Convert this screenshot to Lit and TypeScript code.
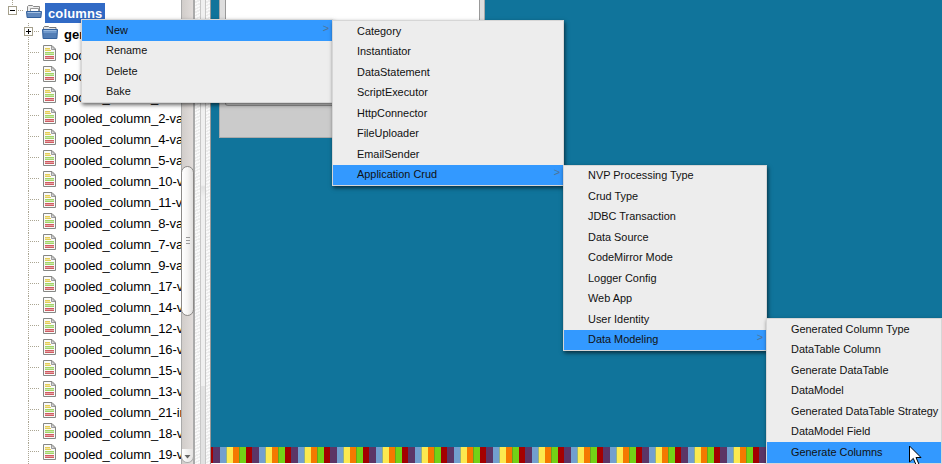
import { LitElement, html, css, svg } from "lit";
import { customElement, property } from "lit/decorators.js";

const columns = ["1-va", "6-va", "3-va", "2-va", "4-va", "5-va", "10-va", "11-va", "8-va", "7-va", "9-va", "17-va", "14-va", "12-va", "16-va", "15-va", "13-va", "21-in", "18-va", "19-va"];

const folder = svg`<path d="M1.5 8V2.5l1-1h4l1 1h6v6" fill="#eee" stroke="#888"/><path d="M4.5 8V4.5h8V8" fill="#fff" stroke="#999"/><path d="M.5 7.5h15l-.6 6h-13.8z" fill="#6088bd" stroke="#315f9b"/><path d="M1.5 8.5h13" stroke="#a7c2e2"/>`;
const closedFolder = svg`<path d="M1.5 11V2.5l1-1h4l1 1h6.5V11" fill="#e4e4e4" stroke="#777"/><path d="M.5 4.5h15l-.6 9h-13.8z" fill="#527db5" stroke="#315f9b"/><path d="M1.5 5.5h13" stroke="#9dbce0"/><path d="M1.5 7h13" stroke="#6f98cb" stroke-width="2"/>`;
const sheet = svg`<path d="M1.5.5h8.5l3.5 3.5v11.5h-12z" fill="#fafaf8" stroke="#858784"/><path d="M9.5 1v3.5h3.7z" fill="#ddd" stroke="#888" stroke-width=".8"/><path d="M3 3.5h5M3 5.5h6" stroke="#e5cd55"/><path d="M3 4.5h5" stroke="#f0e3a0"/><path d="M3 7.5h9M3 9.5h9" stroke="#a0d468"/><path d="M3 8.5h9" stroke="#cbe8ac"/><path d="M3 11.5h9M3 13.5h9" stroke="#cf5c62"/><path d="M3 12.5h9" stroke="#e5a3a5"/>`;

@customElement("context-menu")
class ContextMenu extends LitElement {
  @property({ attribute: false }) items: string[] = [];
  @property() active = "";
  @property({ type: Boolean }) last = false;
  static styles = css`
    :host { display: block; box-sizing: border-box; background: #ededed; border: 1px solid #d6d6d6; box-shadow: 1px 2px 4px rgba(0,0,0,.6); font: 10.92px/13px "Liberation Sans", sans-serif; color: #111; }
    .item { display: flex; height: 20.47px; box-sizing: border-box; padding: var(--text-top, 3.6px) 3px 0 24px; justify-content: space-between; white-space: nowrap; }
    .active { background: #3399ff; }
    .arrow { color: #507496; margin-top: -2px; }
  `;
  render() {
    return this.items.map(i => html`<div class="item ${i === this.active ? "active" : ""}"><span>${i}</span>${i === this.active && !this.last ? html`<span class="arrow">&gt;</span>` : ""}</div>`);
  }
}

@customElement("app-root")
class AppRoot extends LitElement {
  static styles = css`
    :host { display: block; position: relative; width: 942px; height: 464px; overflow: hidden; font: 13px/21px "Liberation Sans", sans-serif; color: #000; background: #fff; }
    .page { display: flex; height: 464px; }
    .tree { width: 181px; height: 464px; overflow: hidden; white-space: nowrap; }
    .row { display: flex; height: 21px; position: relative; }
    .root { height: 23px; }
    .branch { width: 28px; box-sizing: border-box; flex: none; }
    .line { width: 14px; flex: none; background: repeating-linear-gradient(#aaa592 0 1px, transparent 1px 2px) 0 0 / 1px 100% no-repeat, repeating-linear-gradient(90deg, #aaa592 0 1px, transparent 1px 2px) 0 8px / 11px 1px no-repeat; }
    .icon { flex: none; width: 16px; height: 16px; margin-right: 6px; }
    .root .icon { margin: 4px 3px 0 0; }
    .root .branch { width: 26px; }
    .folder .icon { margin-top: 2px; }
    .file .icon { margin-top: 1px; }
    .name { margin-top: 1px; }
    .file .name { letter-spacing: -.09px; }
    .bold { font-weight: bold; }
    .selected { background: #316ac5; color: #fff; height: 20px; margin-top: 3px; padding: 0 3px; font-weight: bold; letter-spacing: .12px; }
    .toggle { position: absolute; left: 8px; top: 6px; width: 9px; height: 9px; }
    .folder .toggle { left: 24px; top: 4px; }
    .rootline { position: absolute; left: 12px; top: 0; width: 14px; height: 12px; background: repeating-linear-gradient(#aaa592 0 1px, transparent 1px 2px) 0 0 / 1px 100% no-repeat, repeating-linear-gradient(90deg, #aaa592 0 1px, transparent 1px 2px) 0 10px / 11px 1px no-repeat; }
    .scroll { width: 14px; height: 464px; position: relative; box-sizing: border-box; border-left: 1px solid #aaa; border-right: 2px solid #aaa; background: linear-gradient(90deg, #d1cdca, #e1dcda); }
    .thumb { position: absolute; top: 166px; left: -1px; width: 13px; height: 150px; box-sizing: border-box; border: 1px solid #8b8987; border-radius: 7px; background: linear-gradient(90deg, #fff, #f5f4f3 50%, #dfdddc); }
    .grip { position: absolute; left: 4px; top: 70px; width: 4px; height: 7px; background: repeating-linear-gradient(#999 0 1px, transparent 1px 3px); }
    .down { position: absolute; left: -1px; bottom: 1px; width: 13px; height: 14px; box-sizing: border-box; border: 1px solid #aaa; border-top: 0; border-radius: 0 0 7px 7px; background: linear-gradient(90deg, #fff, #e4e2e1); }
    .down svg { display: block; margin: 5px 0 0 2px; }
    .splitter { display: flex; width: 16px; box-sizing: border-box; border-right: 1px solid #999; }
    .hatch { width: 5px; background: repeating-linear-gradient(155deg, #fafafa 0 1.5px, #ececec 1.5px 3px); }
    .bar { width: 5px; border: 0 solid #c7c7c7; border-width: 0 1px 0 1px; background: linear-gradient(#f0f0f0 0 185px, #e1e1e1 187px, #f0f0f0 197px, #f0f0f0 386px, #e2e2e2 386px); }
    .hatch.right { width: 4px; }
    .desktop { flex: 1; display: flex; flex-direction: column; background: #10749b; }
    .space { flex: 1; }
    .window { margin-left: 8px; width: 266px; height: 138px; box-sizing: border-box; padding: 0 4px 31px 5px; border: 1px solid #aaa; border-top: 0; background: linear-gradient(#dedede, #dedede 105px, #cbcbcb 107px); }
    .content { height: 106px; box-sizing: border-box; border: 1px solid #999; border-top: 0; border-radius: 0 0 3px 3px; background: #fff; box-shadow: inset 0 -3px #ddd; }
    .stripes { height: 16px; border-bottom: 1px solid #fff; background: repeating-linear-gradient(90deg, #a40000 0 6px, #5c3566 6px 13px, #729fcf 13px 19px, #94b180 19px 20px, #fce94f 20px 26px, #f57900 26px 32px, #69a51c 32px 33px, #73d216 33px 39px) -4px 0 / 780px 100%; }
    context-menu { position: absolute; }
    .new { left: 81px; top: 19.3px; width: 252px; }
    .types { left: 332px; top: 20.4px; width: 232px; }
    .crud { left: 563px; top: 165px; width: 204px; --text-top: 3.4px; }
    .modeling { left: 766px; top: 318.4px; width: 176px; }
    .cursor { position: absolute; left: 908px; top: 445px; width: 14px; height: 22px; }
  `;
  toggle(plus: boolean) {
    return html`<svg class="toggle" viewBox="0 0 9 9"><rect x=".5" y=".5" width="8" height="8" fill="#fff" stroke="#a5a08c"/><path d="${plus ? "M2 4.5h5M4.5 2v5" : "M2 4.5h5"}" stroke="#000"/></svg>`;
  }
  render() {
    return html`
      <div class="page">
        <div class="tree">
          <div class="row root"><div class="rootline"></div>${this.toggle(false)}<div class="branch"></div><svg class="icon" viewBox="0 0 16 16">${folder}</svg><span class="selected">columns</span></div>
          <div class="row folder"><div class="branch"></div><div class="line"></div>${this.toggle(true)}<svg class="icon" viewBox="0 0 16 16">${closedFolder}</svg><span class="name bold">gene</span></div>
          ${columns.map(c => html`<div class="row file"><div class="branch"></div><div class="line"></div><svg class="icon" viewBox="0 0 16 16">${sheet}</svg><span class="name">pooled_column_${c}</span></div>`)}
        </div>
        <div class="scroll"><div class="thumb"><div class="grip"></div></div><div class="down"><svg width="7" height="5"><path d="M.5 1h6L3.5 4.5z" fill="#666"/></svg></div></div>
        <div class="splitter"><div class="hatch"></div><div class="bar"></div><div class="hatch right"></div></div>
        <div class="desktop"><div class="window"><div class="content"></div></div><div class="space"></div><div class="stripes"></div></div>
      </div>
      <context-menu class="new" active="New" .items=${["New", "Rename", "Delete", "Bake"]}></context-menu>
      <context-menu class="types" active="Application Crud" .items=${["Category", "Instantiator", "DataStatement", "ScriptExecutor", "HttpConnector", "FileUploader", "EmailSender", "Application Crud"]}></context-menu>
      <context-menu class="crud" active="Data Modeling" .items=${["NVP Processing Type", "Crud Type", "JDBC Transaction", "Data Source", "CodeMirror Mode", "Logger Config", "Web App", "User Identity", "Data Modeling"]}></context-menu>
      <context-menu class="modeling" active="Generate Columns" last .items=${["Generated Column Type", "DataTable Column", "Generate DataTable", "DataModel", "Generated DataTable Strategy", "DataModel Field", "Generate Columns"]}></context-menu>
      <svg class="cursor" viewBox="0 0 14 22"><path d="M1.5 1v16l3.8-3.6 3 7.1 2.7-1.2-3-6.8h5z" fill="#fff" stroke="#000"/></svg>`;
  }
}
